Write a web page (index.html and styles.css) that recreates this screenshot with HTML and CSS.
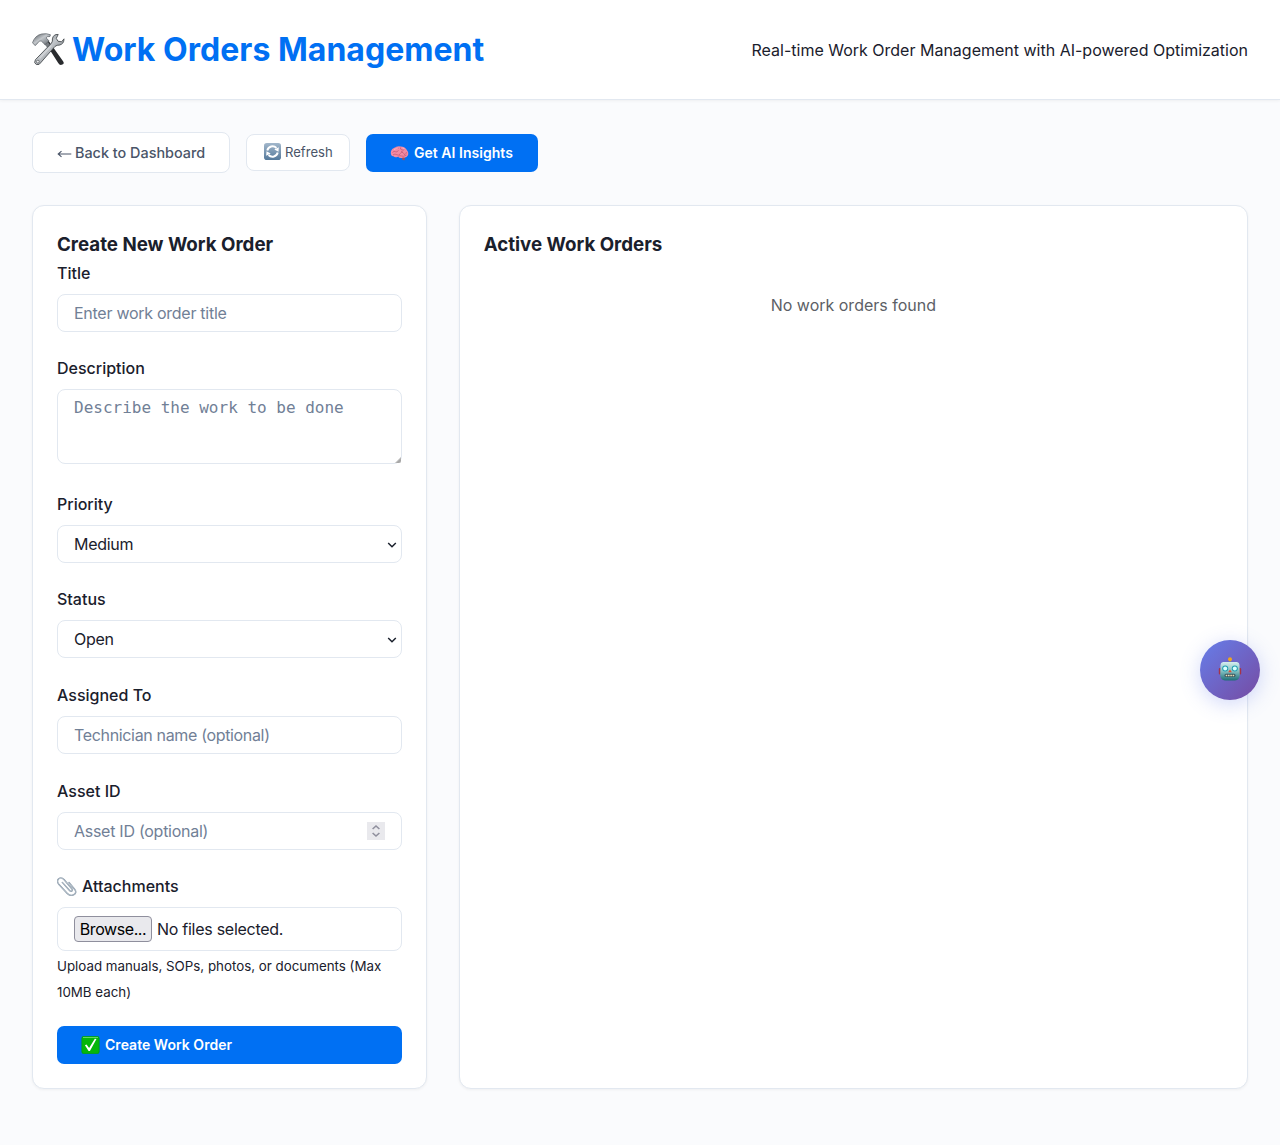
FILE: index.html
```html
<!DOCTYPE html>
<html lang="en">
<head>
<meta charset="utf-8">
<title>Work Orders Management</title>
<link rel="stylesheet" href="styles.css">
</head>
<body>
<header class="header">
  <h1 class="brand">
    <svg class="brand-icon" viewBox="0 0 34 34" aria-hidden="true">
      <defs>
        <linearGradient id="steel" x1="0" y1="0" x2="1" y2="1"><stop offset="0" stop-color="#4b5156"/><stop offset=".45" stop-color="#c3c7cb"/><stop offset="1" stop-color="#555b61"/></linearGradient>
      </defs>
      <path d="M14 10 17 7.500 32 28.500Q34 31 30.500 32.300 28.500 33 27 30.500Z" fill="#292b2e"/>
      <path d="M12.500 10.500 15.500 7.500 21 15 18.500 18Z" fill="#777b80"/>
      <path d="M.5 9.500Q3 2 10 .500 15-.5 19 1.300L18.500 3.100Q15 2.800 14.500 4.500L17.500 7.500 13.500 11.500 9.500 7.700Q7.500 7 6 9.700L3.300 12.500Z" fill="url(#steel)" stroke="#555b60" stroke-width=".7"/>
      <path d="M27 1Q22 .5 21 5.500 21.500 8 20 10L3.500 27Q1.500 30.500 4.500 32 7.500 33 9.500 29.500L23.500 13.500Q26 11.500 28 12 33 11 33 5.500L30.500 8.500 26.800 8 25 5Z" fill="url(#steel)" stroke="#45494d" stroke-width=".9"/>
      <path d="m8 25.500 12-13" stroke="#d3d5d8" stroke-width="1.200"/>
      <circle cx="6" cy="29" r="1.500" fill="#eee" stroke="#555b60" stroke-width=".8"/>
    </svg>
    <span>Work Orders Management</span>
  </h1>
  <div class="tagline">Real-time Work Order Management with AI-powered Optimization</div>
</header>

<main class="main">
  <nav class="toolbar">
    <button class="btn btn-back" type="button">
      <svg class="arrow" viewBox="0 0 15 10" aria-hidden="true"><path d="M14.300 5H1.200M4.500 2.200 1.200 5l3.300 2.800" fill="none" stroke="currentColor" stroke-width="1.100"/></svg>
      <span>Back to Dashboard</span>
    </button>
    <button class="btn btn-refresh" type="button">
      <svg class="emoji-refresh" viewBox="0 0 17 17" aria-hidden="true">
        <defs><linearGradient id="tile" x2="0" y2="1"><stop stop-color="#a2b7cb"/><stop offset="1" stop-color="#55799b"/></linearGradient></defs>
        <rect width="17" height="17" rx="2.800" fill="url(#tile)"/>
        <path d="M3.300 7.500A5.300 5.300 0 0 1 12.400 5M13.700 9.500A5.300 5.300 0 0 1 4.600 12" fill="none" stroke="#fff" stroke-width="1.900"/>
        <path d="m14.800 4.200-.3 4.600-4.200-2.200ZM2.200 12.800l.3-4.600 4.200 2.200Z" fill="#fff"/>
      </svg>
      <span>Refresh</span>
    </button>
    <button class="btn btn-primary btn-insights" type="button">
      <svg class="emoji-brain" viewBox="0 0 18 15" aria-hidden="true">
        <path d="M11 11h3.500L14 14.300l-2-.3Z" fill="#9f4f5b"/>
        <path d="M.3 7Q.2 3.500 3.500 2 6.500-.2 10 .5q4-.1 6 3 2.400 2.800 1.500 5.700Q16 12.200 12.500 11.500 9.800 13 7.500 10.700 4.500 12 3 10.300.5 10.500.3 7Z" fill="#f38ba3"/>
        <path d="M2 6.500q1.500-2 3-.8t3-1.500M5 2q1.500 1 3 .3M10 1.500q-.5 2 1.500 2.500t3-1M2.500 8.800q2-1.500 4 0t3.500-1.500 3 0 3-1.200M8 10.500q1-1.500 3-.5t5-1M10.500 5.500l2 .8" fill="none" stroke="#bd526f" stroke-width=".65"/>
        <path d="M3.500 3.700q2-1.600 4-1.500M12 2q1.700.4 2.500 1.500" fill="none" stroke="#ffc0cc" stroke-width=".7"/>
      </svg>
      <span>Get AI Insights</span>
    </button>
  </nav>

  <div class="grid">
    <section class="card">
      <h3 class="card-title">Create New Work Order</h3>
      <form class="form">
        <div class="group">
          <label class="label" for="title">Title</label>
          <input class="control" id="title" type="text" placeholder="Enter work order title">
        </div>
        <div class="group group-area">
          <label class="label" for="description">Description</label>
          <div class="wrap">
            <textarea class="control area" id="description" placeholder="Describe the work to be done"></textarea>
            <svg class="grip" viewBox="0 0 6 6" aria-hidden="true"><path d="M0 6 6 0V5L5 6Z" fill="#b5b5b5"/><path d="M2.500 6 6 2.500" stroke="#888" stroke-width=".6"/></svg>
          </div>
        </div>
        <div class="group">
          <label class="label" for="priority">Priority</label>
          <div class="wrap">
            <select class="control" id="priority"><option>Medium</option></select>
            <svg class="chevron" viewBox="0 0 10 6" aria-hidden="true"><path d="M1.200 1 5 4.700 8.800 1" fill="none" stroke="#1a202c" stroke-width="1.500"/></svg>
          </div>
        </div>
        <div class="group">
          <label class="label" for="status">Status</label>
          <div class="wrap">
            <select class="control" id="status"><option>Open</option></select>
            <svg class="chevron" viewBox="0 0 10 6" aria-hidden="true"><path d="M1.200 1 5 4.700 8.800 1" fill="none" stroke="#1a202c" stroke-width="1.500"/></svg>
          </div>
        </div>
        <div class="group">
          <label class="label" for="assigned">Assigned To</label>
          <input class="control control-tight" id="assigned" type="text" placeholder="Technician name (optional)">
        </div>
        <div class="group">
          <label class="label" for="asset">Asset ID</label>
          <div class="wrap">
            <input class="control" id="asset" type="text" inputmode="numeric" placeholder="Asset ID (optional)">
            <svg class="spinner" viewBox="0 0 18 18" aria-hidden="true"><path d="M0 0h18v18H0z" fill="#e9e9ed"/><path d="m5.600 7 3.400-3 3.400 3M5.600 11 9 14l3.400-3" fill="none" stroke="#8f8f9d" stroke-width="1.600"/></svg>
          </div>
        </div>
        <div class="group group-files">
          <div class="label label-icon">
            <svg class="clip" viewBox="0 0 20 20" aria-hidden="true"><g fill="none" stroke-linecap="round"><path d="m5.300 6.400 7.500 8.300c1.500 1.600 3.500-.2 2-2L7.200 3.800C3.500-.4-1.800 3.600 1.800 8.300l8.500 9.200c4 4.200 11 .3 7.500-4L12 6.500" stroke="#8293a3" stroke-width="1.400"/><path d="m5.300 6.400 7.500 8.300c1.500 1.600 3.500-.2 2-2L7.200 3.800C3.500-.4-1.800 3.600 1.800 8.300l8.500 9.200c4 4.200 11 .3 7.500-4L12 6.500" stroke="#dce3e9" stroke-width=".5"/></g></svg>
            <span>Attachments</span>
          </div>
          <div class="control file">
            <button class="browse" type="button">Browse...</button>
            <span>No files selected.</span>
          </div>
          <small class="hint">Upload manuals, SOPs, photos, or documents (Max 10MB each)</small>
        </div>
        <button class="btn btn-primary btn-create" type="button">
          <svg class="emoji-check" viewBox="0 0 18 18" aria-hidden="true"><rect x=".3" y=".3" width="17.400" height="17.400" rx="2" fill="#05b60b" stroke="#079b0c" stroke-width=".6"/><path d="M1.500 1.500h15" stroke="#66d65f" stroke-width="1"/><path d="M3.400 9.300 5 8.600l2.600 3.500L13.300 2.800l1.700.1L8.400 15H7.100Z" fill="#fff"/></svg>
          <span>Create Work Order</span>
        </button>
      </form>
    </section>
    <section class="card">
      <h3 class="card-title">Active Work Orders</h3>
      <p class="empty">No work orders found</p>
    </section>
  </div>
</main>

<button class="assistant" type="button" aria-label="AI assistant">
  <svg class="robot" viewBox="0 0 24 24" aria-hidden="true">
    <defs><linearGradient id="face" x2="0" y2="1"><stop stop-color="#d5eeee"/><stop offset=".5" stop-color="#83bfc1"/><stop offset="1" stop-color="#1e6d76"/></linearGradient></defs>
    <path d="M11 3h2v3h-2z" fill="#7a8988"/><circle cx="12" cy="2.300" r="2" fill="#f0a51e"/>
    <rect x=".8" y="11" width="3" height="6.500" rx="1" fill="#a63348"/><rect x="20.200" y="11" width="3" height="6.500" rx="1" fill="#a63348"/>
    <path d="M5 5h14q2.500.3 2.500 3l.3 10Q21.500 23 17 23.500H7Q2.500 23 2.200 18l.3-10q0-2.700 2.500-3Z" fill="url(#face)"/>
    <circle cx="7.200" cy="11.500" r="3" fill="#219fb0"/><circle cx="16.800" cy="11.500" r="3" fill="#219fb0"/><circle cx="7.200" cy="11.500" r="2" fill="#d9ffff"/><circle cx="16.800" cy="11.500" r="2" fill="#d9ffff"/>
    <path d="m12 12.500 1.800 2.700h-3.600Z" fill="#e34b30"/><rect x="6.500" y="16.700" width="11" height="3.400" rx="1.500" fill="#38545c"/>
    <path d="M7.700 18.400h8.600" stroke="#e8dfb7" stroke-width="1.500" stroke-dasharray="1.600 .7"/>
  </svg>
</button>
</body>
</html>
```
FILE: styles.css
```css
* { box-sizing: border-box; margin: 0; padding: 0; }

body {
  min-height: 1145px;
  background: #fafbfd;
  color: #1a202c;
  font: 16px/1.6 Inter, "Liberation Sans", sans-serif;
}

svg { display: block; flex: none; }
button, input, select, textarea { font: inherit; color: inherit; }

.header {
  display: flex;
  align-items: center;
  justify-content: space-between;
  padding: 24px 32px;
  background: #fff;
  border-bottom: 1px solid #e2e8f0;
  box-shadow: 0 1px 3px rgba(0, 0, 0, .05);
}
.brand {
  display: flex;
  align-items: center;
  gap: 7px;
  color: #0070f3;
  font-size: 32px;
  font-weight: 700;
  letter-spacing: .03px;
}
.brand-icon { width: 33px; height: 34px; }
.tagline { padding-top: 2px; }

.main { padding: 32px; }
.toolbar { display: flex; align-items: center; gap: 16px; margin-bottom: 32px; }

.btn {
  display: flex;
  align-items: center;
  border: 1px solid #e2e8f0;
  border-radius: 8px;
  background: #fff;
  color: #4a5568;
  white-space: nowrap;
}
.btn-back { width: 198px; height: 41px; padding: 0 24px; gap: 3px; font-size: 14.400px; font-weight: 500; }
.arrow { width: 15px; height: 10px; margin-top: 3px; }
.btn-refresh { width: 104px; height: 37px; padding: 0 17px; gap: 4px; font-size: 13.100px; }
.emoji-refresh { width: 17px; height: 17px; margin-top: -3px; }
.btn-primary { height: 38px; padding: 0 24px; border: 0; border-radius: 7px; background: #0070f3; color: #fff; font-size: 14px; font-weight: 600; letter-spacing: .03px; }
.btn-insights { width: 172px; padding-top: 1px; gap: 5px; }
.emoji-brain { width: 19px; height: 15px; }
.btn-create { width: 100%; gap: 5px; }
.emoji-check { width: 19px; height: 18px; }

.grid { display: grid; grid-template-columns: minmax(0, 1fr) minmax(0, 2fr); gap: 32px; }
.card {
  height: 884px;
  padding: 24px;
  background: #fff;
  border: 1px solid #e2e8f0;
  border-radius: 12px;
  box-shadow: 0 1px 3px rgba(0, 0, 0, .05);
}
.card-title { padding-top: 1px; font-size: 18.720px; font-weight: 700; line-height: 28.950px; }

.group { margin-bottom: 24px; }
.group-area { margin-bottom: 26.900px; }
.label { display: block; padding-top: .6px; margin-bottom: 7.400px; font-weight: 500; }
.label-icon { display: flex; align-items: center; gap: 5px; padding-top: 0; margin-bottom: 8px; }
.clip { width: 20px; height: 20px; }
.wrap { position: relative; }
.control {
  display: block;
  width: 100%;
  height: 38px;
  padding: 0 16px;
  border: 1px solid #e2e8f0;
  border-radius: 8px;
  background: #fff;
  letter-spacing: -.27px;
  line-height: normal;
  appearance: none;
}
.control-tight { letter-spacing: -.34px; }
.control::placeholder { color: #718096; opacity: 1; }
.area { height: 75px; padding-top: 8px; resize: none; font-family: "DejaVu Sans Mono", monospace; letter-spacing: 0; }
.grip { position: absolute; right: 1px; bottom: 1px; width: 6px; height: 6px; }
.chevron { position: absolute; right: 5px; top: 17px; width: 10px; height: 6px; }
.spinner { position: absolute; right: 17px; top: 10px; width: 18px; height: 18px; }
.file { display: flex; align-items: center; gap: 5px; height: 44px; }
.browse { width: 78px; height: 26px; border: 1px solid #8f8f9d; border-radius: 4px; background: #e9e9ed; color: #000; letter-spacing: -.42px; line-height: 1; white-space: nowrap; }
.group-files { margin-bottom: 21px; }
.hint { display: block; padding-top: 2px; font-size: 13.333px; line-height: 26px; }
.empty { padding-top: 32.700px; color: #5c5f66; text-align: center; }

.assistant {
  position: fixed;
  top: 640px;
  right: 20px;
  display: grid;
  place-items: center;
  width: 60px;
  height: 60px;
  border: 0;
  border-radius: 50%;
  background: linear-gradient(135deg, #667eea, #764ba2);
  box-shadow: 0 4px 20px rgba(102, 126, 234, .3);
}
.robot { width: 24px; height: 24px; margin-top: -3px; }
```
